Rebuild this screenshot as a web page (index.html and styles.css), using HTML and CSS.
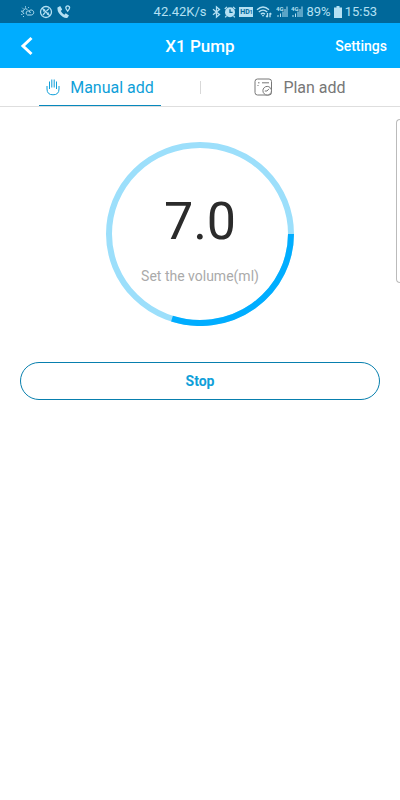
FILE: index.html
```html
<!DOCTYPE html>
<html lang="en">
<head>
    <meta charset="UTF-8">
    <meta name="viewport" content="width=device-width, initial-scale=1.0">
    <title>X1 Pump</title>
    <link rel="stylesheet" href="styles.css">
</head>
<body>
    <div class="status">
        <div class="notices">
            <svg width="14" height="12" viewBox="0 0 14 12">
                <path d="M6.5 9H10.3A2.5 2.5 0 1 0 8.2 5A2.1 2.1 0 1 0 6.5 9M8.2 5Q9.4 6 9.2 7M3 8A2.6 2.6 0 0 1 6.4 3.4M4.5 .3V1.6M1.3 1.8L2.2 2.7M0 5.2H1.2M.2 8.4H1.4M2 11L2.9 10.1M7.8 1.2L7.1 2.1"/>
            </svg>
            <svg class="bold" width="14" height="14" viewBox="0 0 14 14">
                <circle cx="7" cy="7" r="5.5"/>
                <path d="M3 3L11 11M4 10L6.2 7.4M7.5 6L10 3.6M4.2 6.4L6 4.5M8 9.5L9.8 7.8"/>
            </svg>
            <svg class="bold" width="14" height="14" viewBox="0 0 14 14">
                <path class="solid" d="M.5 2.5L3.2 .9L5.2 4.6L3.8 6Q4.9 8.4 7.3 9.7L8.7 8.3L12 10.4L10.5 12.8Q8.6 13.6 6 12Q-.2 8 .5 2.5Z"/>
                <path d="M10.7 6.2Q8.8 3.9 8.8 2.8A1.9 1.9 0 1 1 12.6 2.8Q12.6 3.9 10.7 6.2Z"/>
            </svg>
        </div>
        <div class="system">
            <span class="speed">42.42K/s</span>
            <svg class="bluetooth bold" width="9" height="14" viewBox="0 0 9 14">
                <path d="M1 4.2L7.5 9.5L4.5 12V2L7.5 4.5L1 9.8"/>
            </svg>
            <svg class="bold" width="12" height="12" viewBox="0 0 12 12">
                <circle class="solid" cx="6" cy="6.2" r="5"/>
                <path d="M.8 3L3 .9M11.2 3L9 .9M2.4 10L1.2 11.4M9.6 10L10.8 11.4"/>
                <path class="cut" d="M6 3.2V6.4H8.6"/>
            </svg>
            <span class="hd">HD<small>1</small></span>
            <svg class="bold" width="17" height="14" viewBox="0 0 17 14">
                <path d="M1 4.8Q7 -.8 13 4.8M2.8 7.1Q7 3.2 11.2 7.1M4.8 9.2Q7 7.2 9 9.2"/>
                <path class="solid" d="M5.8 10.3Q7 9.5 8.2 10.3L7 11.8Z"/>
                <path d="M11.5 8V12M10.1 10.8L11.5 12.2M14 12.2V8M15.4 9.4L14 8"/>
            </svg>
            <svg class="signal" width="12" height="13" viewBox="0 0 12 13">
                <text x="0" y="6">4G</text>
                <path d="M2 12V10M4.5 12V8.5M7 12V6.5M9 12V4M11 12V1.5"/>
            </svg>
            <svg class="signal" width="12" height="13" viewBox="0 0 12 13">
                <text x="0" y="6">4G</text>
                <path d="M2 12V10M4.5 12V8.5M7 12V6.5M9 12V4M11 12V1.5"/>
            </svg>
            <span class="percent">89%</span>
            <svg width="8" height="12" viewBox="0 0 8 12">
                <path class="solid" d="M0 1.5H2.5V0H5.5V1.5H8V12H0Z"/>
            </svg>
            <span class="time">15:53</span>
        </div>
    </div>

    <header class="header">
        <button class="back" type="button" aria-label="Back">
            <svg width="14" height="20" viewBox="0 0 14 20"><path d="M11.5 2L3 10L11.5 18"/></svg>
        </button>
        <h1>X1 Pump</h1>
        <a class="settings" href="#">Settings</a>
    </header>

    <nav class="tabs">
        <a class="tab active" href="#">
            <svg width="14" height="18" viewBox="0 0 14 18">
                <path d="M3.5 11V3.5M5.8 9.5V1.5M8.2 9.5V1.5M10.5 11V3.5M1 8V11Q1 16.8 7 16.8T13 11V8"/>
            </svg>
            <span>Manual add</span>
        </a>
        <a class="tab" href="#">
            <svg width="19" height="18" viewBox="0 0 19 18">
                <rect x="1" y="1" width="16.5" height="16" rx="2.5"/>
                <path d="M4 4.8H5.5M8 4.8H15M4 7V8"/>
                <circle class="clock" cx="13.2" cy="12.7" r="4.3"/>
                <path d="M10.8 13H13L15 10.8"/>
            </svg>
            <span>Plan add</span>
        </a>
    </nav>

    <main>
        <div class="drawer"></div>
        <div class="dial">
            <svg class="ring" viewBox="0 0 188 184">
                <ellipse cx="94" cy="92" rx="91" ry="89"/>
                <path d="M185 92A91 89 0 0 1 66 176.7"/>
            </svg>
            <div class="volume">7.0</div>
            <div class="hint">Set the volume(ml)</div>
        </div>
        <button class="stop" type="button">Stop</button>
    </main>
</body>
</html>
```
FILE: styles.css
```css
*{
    padding: 0;
    margin: 0;
    box-sizing: border-box;
}
body{
    min-height: 100vh;
    background-color: #fff;
    font-family: Roboto, "Liberation Sans", sans-serif;
}
a{
    color: inherit;
    text-decoration: none;
}
button{
    font-family: inherit;
    cursor: pointer;
}
svg{
    display: block;
    flex: none;
    fill: none;
    stroke: currentColor;
}
.status{
    display: flex;
    justify-content: space-between;
    align-items: center;
    height: 23px;
    padding: 0 23px 0 21px;
    background-color: #00689a;
    color: #b4e0f3;
    font-size: 13px;
}
.notices{
    display: flex;
    align-items: center;
    gap: 4px;
}
.system{
    display: flex;
    align-items: center;
    gap: 3px;
}
.bluetooth{
    margin-left: 3px;
}
.bold{
    stroke-width: 1.3;
}
.status .solid{
    fill: currentColor;
    stroke: none;
}
.status .cut{
    stroke: #00689a;
}
.signal text{
    font-size: 6px;
    font-weight: 700;
    fill: currentColor;
    stroke: none;
}
.hd{
    display: flex;
    justify-content: center;
    align-items: center;
    width: 14px;
    height: 10px;
    background-color: #b4e0f3;
    color: #00689a;
    font-size: 7px;
    font-weight: 700;
}
.hd small{
    font-size: 5px;
}
.header{
    display: grid;
    grid-template-columns: 1fr auto 1fr;
    align-items: center;
    height: 45px;
    padding: 0 13px;
    background-color: #00adff;
    color: #fff;
}
.back{
    justify-self: start;
    padding: 0 7px;
    border: none;
    background: none;
    color: #fff;
}
.back svg{
    stroke-width: 3;
}
h1{
    font-size: 17px;
    font-weight: 500;
}
.settings{
    justify-self: end;
    font-size: 14px;
    font-weight: 500;
}
.tabs{
    position: relative;
    display: flex;
    height: 39px;
    border-bottom: 1px solid #dedede;
}
.tabs::after{
    content: "";
    position: absolute;
    top: 13px;
    left: 50%;
    width: 1px;
    height: 13px;
    background-color: #d8d8d8;
}
.tab{
    flex: 1;
    display: flex;
    justify-content: center;
    gap: 10px;
    color: #777;
    font-size: 16px;
}
.tab span{
    line-height: 39px;
}
.tab svg{
    margin-top: 10px;
}
.tab .clock{
    fill: #fff;
}
.active{
    flex: none;
    width: 122px;
    margin: 0 calc(25% - 61px);
    border-bottom: 1px solid #0788bd;
    color: #0f9fd9;
}
main{
    position: relative;
    display: flex;
    flex-direction: column;
    align-items: center;
    gap: 36px;
    padding: 35px 20px;
}
/* edge of the side drawer */
.drawer{
    position: absolute;
    top: 12px;
    right: 0;
    width: 4px;
    height: 164px;
    border: 1px solid #bbb;
    border-right: none;
    border-radius: 4px 0 0 4px;
}
.dial{
    position: relative;
    display: flex;
    flex-direction: column;
    align-items: center;
    gap: 14px;
    width: 188px;
    height: 184px;
    padding-top: 50px;
}
.ring{
    position: absolute;
    inset: 0;
    stroke: #9cdffb;
    stroke-width: 6;
}
.ring path{
    stroke: #00adff;
}
.volume{
    color: #2b2b2b;
    font-size: 52px;
    line-height: 60px;
}
.hint{
    color: #aaa;
    font-size: 14px;
    line-height: 20px;
}
.stop{
    width: 100%;
    height: 38px;
    border: 1px solid #087fae;
    border-radius: 19px;
    background-color: #fff;
    color: #0f9fd9;
    font-size: 14px;
    font-weight: 700;
}
```
